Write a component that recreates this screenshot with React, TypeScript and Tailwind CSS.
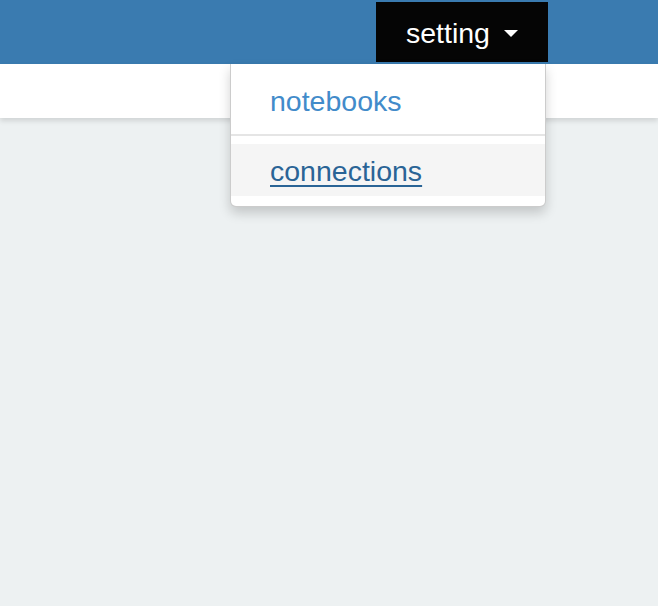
import React from "react";

export default function App() {
  return (
    <div
      className="relative w-[658px] h-[606px] bg-[#edf1f2] overflow-hidden"
      style={{ fontFamily: '"Liberation Sans", Arial, sans-serif' }}
    >
      <div className="h-16 bg-[#3a7bb0] flex justify-end items-start pr-[110px] pt-[2px]">
        <button className="h-[60px] w-[172px] bg-[#050505] text-white text-[28.5px] flex items-center justify-center gap-[14px] pt-[3px]">
          <span>setting</span>
          <svg width="14" height="8" viewBox="0 0 14 8" className="mt-[1px]">
            <polygon points="0,0 14,0 7,7" fill="#ffffff" />
          </svg>
        </button>
      </div>
      <div className="h-[54px] bg-white shadow-[0_3px_5px_rgba(0,0,0,0.12)]" />
      <div className="absolute left-[230px] top-[64px] w-[316px] bg-white border border-[rgba(0,0,0,0.2)] border-t-0 rounded-b-[6px] shadow-[0_6px_12px_rgba(0,0,0,0.18)] py-[10px] text-[28.5px]">
        <div className="h-[52px] flex items-center pl-[39px] pt-[2px]">
          <a className="text-[#428bca]">notebooks</a>
        </div>
        <div className="h-[2px] my-2 bg-[#e5e5e5]" />
        <div className="h-[52px] flex items-center pl-[39px] pt-[2px] bg-[#f5f5f5]">
          <a className="text-[#2a6496] underline underline-offset-[4px] decoration-2">connections</a>
        </div>
      </div>
    </div>
  );
}
